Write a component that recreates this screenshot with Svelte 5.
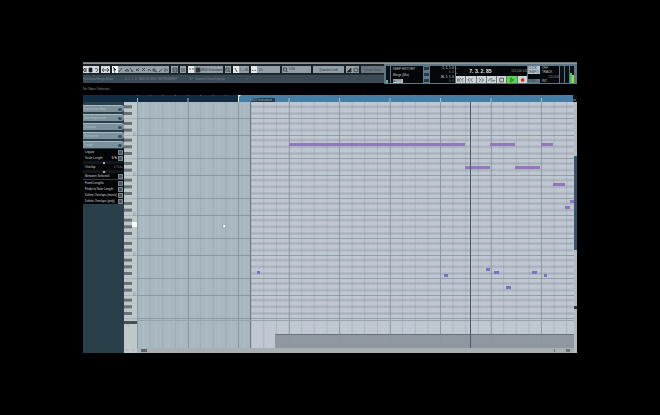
<script lang="ts">
	type Note = { x: number, y: number, w: number, low?: boolean }

	// grid geometry, origin is the top left corner of the note display
	const octave = 40
	const semi = octave / 12
	const bar = 50.5
	const firstC = 33.3

	const octaves = [-1, 0, 1, 2, 3, 4, 5, 6]
	// black keys, counted in semitones above the bottom of C
	const blacks = [2, 4, 7, 9, 11]

	const blackRows = octaves
		.flatMap(o => blacks.map(b => firstC + o * octave - b * semi))
		.filter(y => y > -2 && y < 214)
	const octaveLines = octaves
		.flatMap(o => [firstC + o * octave, firstC + o * octave - 5 * semi])
		.filter(y => y > 0 && y < 218)
	const cLabels = [0, 1, 2, 3, 4]

	const beats = Array.from({ length: 35 }, (_, i) => i * bar / 4)
	const bars = Array.from({ length: 9 }, (_, i) => i * bar)

	const notes: Note[] = [
		{ x: 152, y: 41, w: 176 },
		{ x: 328, y: 64, w: 25 },
		{ x: 353, y: 41, w: 25 },
		{ x: 378, y: 64, w: 25 },
		{ x: 404, y: 41, w: 12 },
		{ x: 416, y: 81, w: 12 },
		{ x: 428, y: 104, w: 5 },
		{ x: 433, y: 98, w: 4 },
		{ x: 120, y: 169, w: 3, low: true },
		{ x: 307, y: 172, w: 4, low: true },
		{ x: 349, y: 166, w: 4, low: true },
		{ x: 357, y: 169, w: 5, low: true },
		{ x: 369, y: 184, w: 5, low: true },
		{ x: 395, y: 169, w: 5, low: true },
		{ x: 407, y: 172, w: 3, low: true },
	]

	const sections = ['Expression Map', 'Note Expression', 'Quantize', 'Transpose', 'Length']
	const lengthActions = ['Pedal to Note Length', 'Delete Overlaps (mono)', 'Delete Overlaps (poly)']

	const tools = [
		{ name: 'Draw', d: 'M1 5 L4 1' },
		{ name: 'Erase', d: 'M1 4 L3 2 L5 4 Z' },
		{ name: 'Trim', d: 'M1 1 L4 5 M2 4 H4' },
		{ name: 'Split', d: 'M1 4 L4 1 M1 2 L4 4' },
		{ name: 'Mute', d: 'M1 1 L4 4 M4 1 L1 4' },
		{ name: 'Glue', d: 'M1 4 L2 2 L4 4' },
		{ name: 'Zoom', d: 'M1 2 H3 V4 H1 Z M3 4 L5 5' },
		{ name: 'Line', d: 'M1 5 L4 2' },
		{ name: 'Warp', d: 'M1 1 V5 M3 2 V4' },
	]

	const transport = [
		{ name: 'Go to start', d: 'M2 1 V5 M5 1 L3 3 L5 5 M8 1 L6 3 L8 5' },
		{ name: 'Rewind', d: 'M4 1 L2 3 L4 5 M7 1 L5 3 L7 5' },
		{ name: 'Forward', d: 'M2 1 L4 3 L2 5 M5 1 L7 3 L5 5' },
		{ name: 'Cycle', d: 'M2 4 V3 Q3 1 6 2 M8 3 V4 H4' },
		{ name: 'Stop', d: 'M3 1 H7 V5 H3 Z' },
		{ name: 'Play', d: 'M4 1 L7 3 L4 5 Z' },
		{ name: 'Record', d: '' },
	]

	let playing = true
	let quantize = '1/16'
	let activeTool = 'Select'
</script>

<main class="editor">
	<header>
		<div class="left">
			<div class="toolbar">
				<div class="group light g1">
					<button aria-label="Solo editor"><svg viewBox="0 0 5 6"><path d="M0 3 L2 1 V5 Z M3 1 V5" /></svg></button>
					<button aria-label="Acoustic feedback"><svg viewBox="0 0 5 6"><path d="M1 1 H4 V5 H1 Z" fill="#111" /></svg></button>
					<button aria-label="Show info"><svg viewBox="0 0 5 6"><path d="M1 2 Q3 0 4 3 L2 5" /></svg></button>
				</div>
				<div class="group light g2">
					<button aria-label="Auto scroll"><svg viewBox="0 0 9 6"><path d="M1 3 H8 M3 1 L1 3 L3 5 M6 1 L8 3 L6 5" /></svg></button>
				</div>
				<div class="group g3">
					<button class="tool" class:on={activeTool === 'Select'} aria-label="Select" on:click={() => activeTool = 'Select'}>
						<svg viewBox="0 0 5 6"><path d="M1 0 L4 3 L2 3 L3 6" fill="#111" /></svg>
					</button>
					{#each tools as tool}
						<button class="tool" class:on={activeTool === tool.name} aria-label={tool.name} on:click={() => activeTool = tool.name}>
							<svg viewBox="0 0 5 6"><path d={tool.d} /></svg>
						</button>
					{/each}
				</div>
				<div class="group g4"><button aria-label="Show part borders"><svg viewBox="0 0 6 6"><path d="M1 1 H5 V5 H1 Z M1 3 H5" /></svg></button></div>
				<div class="group g5"><button aria-label="Edit active part"><svg viewBox="0 0 6 6"><path d="M1 2 H5 M1 4 H5" /></svg></button></div>
				<div class="group g6">
					<button class="chip" aria-label="Velocity"><svg viewBox="0 0 5 6"><path d="M1 1 V3 M4 1 V3" /></svg></button>
					<button class="icon" aria-label="Part list"><svg viewBox="0 0 6 6"><path d="M1 1 H5 V5 H1 Z" fill="#333" /></svg></button>
					<button class="word">MIDI Instrument</button>
				</div>
				<div class="group g5"><button aria-label="Indicate transpositions"><svg viewBox="0 0 6 6"><path d="M1 1 H4 V4 H1 Z M4 4 L5 5" /></svg></button></div>
				<div class="group g7">
					<button class="chip" aria-label="Snap"><svg viewBox="0 0 5 6"><path d="M1 1 L3 5" /></svg></button>
					<button class="word">1 + 36</button>
				</div>
				<div class="group g8">
					<button class="chip">▸◂</button>
					<button class="word start">20</button>
				</div>
				<div class="group g8">
					<svg class="lens" viewBox="0 0 6 6"><path d="M1 1 H4 V4 H1 Z M4 4 L5 5" /></svg>
					<select aria-label="Quantize" bind:value={quantize}>
						<option>1/8</option>
						<option>1/16</option>
						<option>1/32</option>
					</select>
				</div>
				<div class="group g9"><button class="word">Quantize Link</button></div>
				<div class="group g10">
					<button aria-label="Step input"><svg viewBox="0 0 6 6"><path d="M1 5 H5 V1 Z" fill="#222" /></svg></button>
					<button aria-label="MIDI input"><svg viewBox="0 0 6 6"><path d="M1 2 L3 1 L5 2 V4 L3 5 L1 4 Z" /></svg></button>
				</div>
				<div class="group dim g11"><button class="word">Chord Track</button></div>
			</div>
			<div class="info">
				<span class="name">Part Data Merge Mode</span>
				<span class="pos">1. 1. 1. 0 &nbsp; MIDI 01 MIDI INSTRUMENT</span>
				<span>37 &nbsp; Current Chord Display</span>
				<span class="tail">◇</span>
			</div>
		</div>

		<section class="transport" aria-label="Transport">
			<div class="meter cpu"><i></i></div>
			<div class="panel modes">
				<span>KEEP HISTORY</span>
				<span>Merge (Mix)</span>
				<button>AUTO</button>
			</div>
			<div class="col"><i></i><i></i><i></i></div>
			<div class="panel locators">
				<span>1. 1. 1. 0</span>
				<span class="low">0. 0</span>
				<span>36. 1. 1. 0</span>
				<span class="low">0. 0</span>
			</div>
			<div class="center">
				<div class="display">
					<span>−<br>+</span>
					<strong>7. 3. 2. 85</strong>
					<span class="tempo">120.000 4/4</span>
				</div>
				<div class="keys">
					{#each transport as t}
						<button
							aria-label={t.name}
							class:playing={t.name === 'Play' && playing}
							on:click={() => { if (t.name === 'Play') playing = true; if (t.name === 'Stop') playing = false }}
						>
							<svg viewBox="0 0 10 6">
								{#if t.name === 'Record'}
									<circle cx="5" cy="3" r="2" fill="#cf2b25" stroke="none" />
								{:else}
									<path d={t.d} />
								{/if}
							</svg>
						</button>
					{/each}
				</div>
			</div>
			<div class="panel click">
				<div class="pair"><button>CLICK</button><span>OFF</span></div>
				<div class="pair"><button>TEMPO</button><span>TRACK</span></div>
				<div class="pair"><span class="wide">120.000</span></div>
				<div class="pair"><button class="dull">SYNC</button><span>INT.</span></div>
			</div>
			<div class="meter"></div>
			<div class="meter"></div>
			<div class="meter out"><i></i><b></b></div>
			<div class="end"></div>
		</section>
	</header>

	<p class="status">No Object Selected</p>

	<svg class="ruler" viewBox="0 0 494 7" preserveAspectRatio="none" aria-hidden="true">
		<rect width="156" height="7" fill="#102c43" />
		<rect x="155" width="339" height="7" fill="#467da5" />
		{#each beats as x}
			<rect x={54 + x} y="0" width="1" height="1" fill="#7c9db5" opacity="0.5" />
		{/each}
		{#each bars as x}
			<rect x={54 + x} y="3" width="1" height="4" fill="#a3c0d3" />
		{/each}
		<path d="M155 0 H158 L156 2 V7 H155 Z" fill="#eef4f7" />
		<rect x="490" width="4" height="7" fill="#0b1116" />
		<path d="M490 5 H493" stroke="#7d8b94" />
	</svg>

	<div class="body">
		<aside>
			{#each sections as s}
				<button class="section"><span>{s}</span><i></i></button>
			{/each}
			<div class="box">
				<button class="row"><span>Legato</span><i></i></button>
				<div class="row"><span>Scale Length</span><b>0 %</b><i></i></div>
				<input type="range" aria-label="Scale length" value="50">
				<div class="row tall"><span>Overlap</span><em>0 Ticks</em></div>
				<input type="range" aria-label="Overlap" value="50">
				<button class="row"><span>Between Selected</span><i></i></button>
			</div>
			<div class="box last">
				<button class="row"><span>Fixed Lengths</span><i></i></button>
				{#each lengthActions as a}
					<button class="row"><span>{a}</span><i></i></button>
				{/each}
			</div>
		</aside>

		<svg class="piano" viewBox="0 0 13 251" preserveAspectRatio="none" role="img" aria-label="Keyboard">
			<rect width="13" height="251" fill="#bec8cb" />
			{#each octaveLines as y}
				<rect y={y} width="13" height="0.5" fill="#8d999e" />
			{/each}
			{#each blackRows as y}
				<rect y={y} width="8" height="3" fill="#667277" />
			{/each}
			{#each cLabels as o}
				<path d="M12 {31 + o * octave} H9.5 V{33 + o * octave} H12" fill="none" stroke="#7b878c" stroke-width="0.5" />
			{/each}
			<rect x="8" y="120" width="5" height="5" fill="#fbfdfd" />
			<rect y="219" width="13" height="3" fill="#454e52" />
			<path d="M2 223 H5 V225 M2 248 H4 M8 248 H11" fill="none" stroke="#98a3a7" stroke-width="0.5" />
		</svg>

		<div class="display-area">
			<svg class="notes" viewBox="0 0 437 246" preserveAspectRatio="none" role="img" aria-label="Note display">
				<rect width="437" height="246" fill="#a9b8c0" />
				<rect x="114" width="323" height="246" fill="#bfc7d1" />
				{#each blackRows as y}
					<rect x="114" y={y} width="323" height="3" fill="#b2bac6" />
					<rect x="114" y={y + 1} width="323" height="1" fill="#a5adba" />
				{/each}
				{#each beats as x}
					<rect x={x + 6} width="1" height="246" fill="#cbd5da" opacity="0.2" />
					<rect x={x} width="1" height="246" fill="#83929d" opacity="0.3" />
				{/each}
				{#each bars as x}
					<rect x={Math.round(x)} width="1" height="246" fill="#74828c" opacity="0.5" />
				{/each}
				{#each octaveLines as y}
					<rect y={Math.floor(y)} width="437" height="1" fill="#7f9099" opacity="0.75" />
				{/each}
				<rect x="113" width="1" height="246" fill="#687780" />
				<rect y="218" width="437" height="1" fill="#98a4ac" />
				<rect x="138" y="233" width="299" height="13" fill="#8b949c" opacity="0.93" />
				<rect x="138" y="232" width="299" height="1" fill="#69737c" />
				{#each notes as n}
					<rect x={n.x} y={n.y} width={n.w} height="3" fill={n.low ? '#7774bd' : '#9078bd'} />
				{/each}
				<rect x="333" width="1" height="246" fill="#4c5963" />
				<path d="M86 122 L89 123 L88 126 L86 126 Z" fill="#fff" stroke="#73818a" stroke-width="0.5" />
			</svg>
			<div class="hscroll"><i></i><b></b></div>
			<span class="part">MIDI Instrument</span>
		</div>

		<div class="vscroll"><i></i><b></b></div>
	</div>
</main>

<style>
	:global(body) {
		margin: 0;
		background: #000;
	}
	.editor {
		margin: 62px 83px;
		font-family: 'Liberation Sans', Arial, sans-serif;
		font-size: 3px;
		line-height: 4px;
		color: #aeb6ba;
		background: #000;
	}
	button, select {
		all: unset;
		box-sizing: border-box;
		cursor: pointer;
		white-space: nowrap;
	}
	svg {
		display: block;
	}
	header {
		display: flex;
		height: 21px;
		border-top: 1px solid #70797d;
	}
	.left {
		flex: 1;
		min-width: 0;
		border-top: 1px solid #8c9498;
	}
	.toolbar {
		display: flex;
		gap: 2px;
		height: 10px;
		padding: 2px 0 1px;
		box-sizing: border-box;
		background: #192026;
		overflow: hidden;
	}
	.group {
		display: flex;
		align-items: center;
		flex: none;
		background: #919ea6;
		color: #242b30;
		overflow: hidden;
	}
	.group button {
		flex: 1;
		height: 7px;
		display: flex;
		align-items: center;
		justify-content: center;
	}
	.group svg, .keys svg {
		height: 6px;
		fill: none;
		stroke: #30383d;
		stroke-width: 0.8;
	}
	.group.light {
		background: #d4dadd;
	}
	.group.dim {
		background: #66757f;
		color: #3c4952;
	}
	.g1 { width: 16px; }
	.g2 { width: 9px; }
	.g3 { width: 57px; }
	.g4 { width: 7px; }
	.g5 { width: 6px; }
	.g6 { width: 35px; }
	.g7 { width: 16px; }
	.g8 { width: 29px; }
	.g9 { width: 31px; }
	.g10 { width: 13px; }
	.g11 { flex: 1; }
	.tool.on {
		background: #f2f5f6;
	}
	.group .chip {
		flex: none;
		width: 6px;
		background: #e3e8ea;
	}
	.group .icon {
		flex: none;
		width: 7px;
	}
	.group .start {
		justify-content: start;
		padding-left: 2px;
	}
	.lens {
		width: 7px;
	}
	select {
		flex: 1;
		height: 7px;
		line-height: 7px;
	}
	.info {
		display: flex;
		gap: 12px;
		height: 9px;
		line-height: 8px;
		box-sizing: border-box;
		border-top: 1px solid #222c33;
		background: #3a4a55;
		color: #73848e;
		white-space: nowrap;
	}
	.name {
		width: 30px;
	}
	.tail {
		margin-left: auto;
		margin-right: 136px;
	}

	.transport {
		display: flex;
		gap: 1px;
		flex: none;
		width: 193px;
		padding: 2px 2px 1px;
		box-sizing: border-box;
		background: #5f7685;
		border-top: 1px solid #8b979e;
		overflow: hidden;
	}
	.panel {
		display: flex;
		flex-direction: column;
		justify-content: space-between;
		background: #05080a;
		padding: 0 1px;
		box-sizing: border-box;
		color: #c4cbce;
		white-space: nowrap;
		overflow: hidden;
	}
	.modes {
		width: 32px;
		padding: 1px 2px 0;
	}
	.modes button {
		width: 10px;
		height: 4px;
		line-height: 4px;
		background: #b7c2c8;
		color: #333;
	}
	.col {
		display: flex;
		flex-direction: column;
		justify-content: space-around;
		width: 5px;
	}
	.col i {
		height: 3px;
		background: #263945;
	}
	.locators {
		width: 25px;
		text-align: right;
		color: #e2e6e8;
	}
	.locators .low {
		color: #7f898e;
	}
	.center {
		width: 71px;
	}
	.display {
		display: flex;
		align-items: center;
		justify-content: space-between;
		height: 10px;
		background: #05080a;
		white-space: nowrap;
	}
	.display strong {
		margin-right: 8px;
		font-size: 5px;
		line-height: 8px;
		color: #e6eaec;
	}
	.tempo {
		color: #8e989d;
	}
	.keys {
		display: flex;
		gap: 1px;
		height: 7px;
	}
	.keys button {
		flex: 1;
		display: flex;
		align-items: center;
		justify-content: center;
		background: #cfd5d7;
		overflow: hidden;
	}
	.keys svg {
		width: 10px;
	}
	.keys .playing {
		background: #55d946;
	}
	.click {
		width: 31px;
		padding: 0;
	}
	.pair {
		display: flex;
		gap: 2px;
		height: 4px;
	}
	.pair button {
		width: 12px;
		background: #b4c2cb;
		color: #2d3a43;
	}
	.pair .dull {
		background: #5d7380;
	}
	.wide {
		margin-left: auto;
		color: #7f898e;
	}
	.meter {
		display: flex;
		align-items: flex-end;
		width: 4px;
		background: #0a1116;
	}
	.meter i {
		width: 2px;
		height: 10px;
		background: #3fc66a;
	}
	.meter b {
		width: 2px;
		height: 8px;
		background: #a3d94b;
	}
	.cpu i {
		height: 3px;
		background: #5db1a0;
	}
	.end {
		flex: 1;
		background: #3d5361;
	}

	.status {
		margin: 0;
		height: 11px;
		line-height: 10px;
		color: #8d9497;
	}
	.ruler {
		width: 100%;
		height: 7px;
	}
	.body {
		display: flex;
		height: 251px;
	}
	aside {
		display: flex;
		flex-direction: column;
		gap: 2px;
		width: 41px;
		padding-top: 3px;
		box-sizing: border-box;
		background: #293f49;
	}
	.section {
		display: flex;
		align-items: center;
		justify-content: space-between;
		height: 7px;
		padding: 0 2px 0 1px;
		border-top: 1px solid #a9bac1;
		border-radius: 0 3px 3px 0;
		background: #7b919b;
		color: #b2c0c6;
	}
	.section i {
		width: 4px;
		height: 3px;
		border-radius: 2px;
		background: #3c535f;
	}
	.box {
		margin-top: -1px;
		background: #030506;
		color: #cfd5d7;
	}
	.row {
		display: flex;
		align-items: center;
		gap: 1px;
		width: 100%;
		height: 6px;
		padding: 0 1px 0 2px;
		box-sizing: border-box;
		white-space: nowrap;
	}
	.row span {
		flex: 1;
	}
	.row i {
		width: 5px;
		height: 5px;
		border: 1px solid #77858c;
		background: #46545b;
		box-sizing: border-box;
	}
	.row em {
		font-style: normal;
		color: #7b868b;
	}
	input {
		appearance: none;
		display: block;
		width: 100%;
		height: 3px;
		margin: 0;
		background: #10181c;
	}
	input::-webkit-slider-thumb {
		appearance: none;
		width: 2px;
		height: 2px;
		background: #a9b4b9;
	}
	.piano {
		width: 13px;
		height: 251px;
	}
	.display-area {
		position: relative;
		flex: 1;
		min-width: 0;
	}
	.notes {
		width: 100%;
		height: 246px;
	}
	.part {
		position: absolute;
		left: 26%;
		top: -4px;
		width: 24px;
		height: 4px;
		white-space: nowrap;
		background: #24394a;
		color: #9fb6c5;
	}
	.hscroll {
		display: flex;
		justify-content: space-between;
		height: 5px;
		padding: 1px 4px;
		box-sizing: border-box;
		background: #a9b0b5;
	}
	.hscroll i {
		width: 6px;
		background: #5e6a70;
	}
	.hscroll b {
		width: 16px;
		border: solid #6b767c;
		border-width: 0 4px 0 1px;
		box-sizing: border-box;
	}
	.vscroll {
		display: flex;
		flex-direction: column;
		width: 3px;
		padding-top: 54px;
		box-sizing: border-box;
		background: #b3bcc0;
	}
	.vscroll i {
		height: 94px;
		background: #36566c;
	}
	.vscroll b {
		height: 3px;
		margin-top: 56px;
		background: #2c363b;
	}
</style>
